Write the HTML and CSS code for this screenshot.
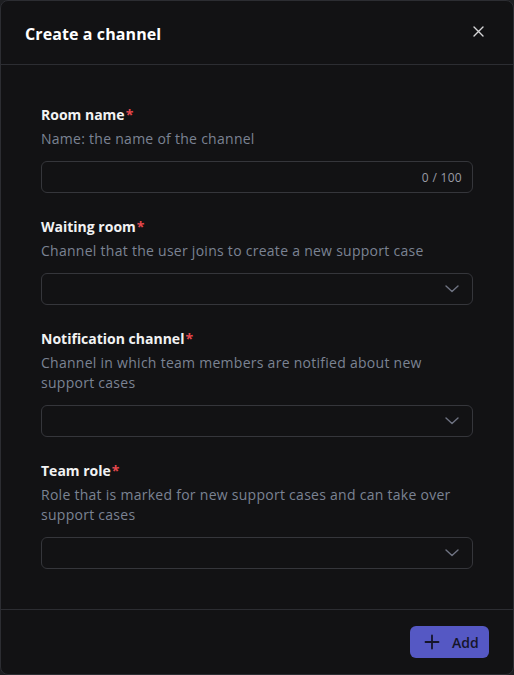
FILE: index.html
```html
<!DOCTYPE html>
<html lang="en">
<head>
<meta charset="utf-8">
<title>Create a channel</title>
<link rel="stylesheet" href="styles.css">
</head>
<body>
<div class="modal">
  <header class="modal-header">
    <h1 class="modal-title">Create a channel</h1>
    <button class="close-btn" aria-label="Close">
      <svg width="11" height="11" viewBox="0 0 11 11"><path d="M1 1L10 10M10 1L1 10" stroke="currentColor" stroke-width="1.4" stroke-linecap="round"/></svg>
    </button>
  </header>
  <div class="modal-body">
    <div class="field">
      <label class="label">Room name<span class="req">*</span></label>
      <p class="desc">Name: the name of the channel</p>
      <div class="input">
        <span class="counter">0 / 100</span>
      </div>
    </div>
    <div class="field">
      <label class="label">Waiting room<span class="req">*</span></label>
      <p class="desc">Channel that the user joins to create a new support case</p>
      <div class="input select">
        <svg class="chev" width="14" height="8" viewBox="0 0 14 8"><path d="M1 1L7 6.5L13 1" fill="none" stroke="currentColor" stroke-width="1.4" stroke-linecap="round" stroke-linejoin="round"/></svg>
      </div>
    </div>
    <div class="field">
      <label class="label">Notification channel<span class="req">*</span></label>
      <p class="desc">Channel in which team members are notified about new support cases</p>
      <div class="input select">
        <svg class="chev" width="14" height="8" viewBox="0 0 14 8"><path d="M1 1L7 6.5L13 1" fill="none" stroke="currentColor" stroke-width="1.4" stroke-linecap="round" stroke-linejoin="round"/></svg>
      </div>
    </div>
    <div class="field">
      <label class="label">Team role<span class="req">*</span></label>
      <p class="desc">Role that is marked for new support cases and can take over support cases</p>
      <div class="input select">
        <svg class="chev" width="14" height="8" viewBox="0 0 14 8"><path d="M1 1L7 6.5L13 1" fill="none" stroke="currentColor" stroke-width="1.4" stroke-linecap="round" stroke-linejoin="round"/></svg>
      </div>
    </div>
  </div>
  <footer class="modal-footer">
    <button class="add-btn">
      <svg width="16" height="16" viewBox="0 0 16 16"><path d="M8 1.5V14.5M1.5 8H14.5" stroke="currentColor" stroke-width="1.8" stroke-linecap="round"/></svg>
      <span>Add</span>
    </button>
  </footer>
</div>
</body>
</html>
```
FILE: styles.css
```css
* { box-sizing: border-box; }
html, body {
  margin: 0;
  padding: 0;
  background: #1d1e21;
}
body {
  font-family: "Open Sans", "Noto Sans", sans-serif;
  color: #f2f2f3;
}
.modal {
  width: 514px;
  height: 675px;
  background: #121214;
  border: 1px solid #2c2d32;
  border-radius: 8px;
  display: flex;
  flex-direction: column;
  overflow: hidden;
}
.modal-header {
  height: 64px;
  display: flex;
  align-items: center;
  justify-content: space-between;
  padding: 0 24px 0 24px;
  border-bottom: 1px solid #2c2d32;
  flex-shrink: 0;
}
.modal-title {
  margin: 0;
  font-size: 16px;
  font-weight: 700;
  color: #ffffff;
  padding-top: 2px;
  letter-spacing: 0.1px;
}
.close-btn {
  background: none;
  border: 0;
  padding: 0;
  color: #d6d6d8;
  display: flex;
  margin-right: 5px;
  margin-top: -2px;
}
.modal-body {
  flex: 1;
  padding: 40px 40px 40px 40px;
  display: flex;
  flex-direction: column;
  gap: 24px;
}
.field {
  display: flex;
  flex-direction: column;
}
.label {
  font-size: 14px;
  line-height: 20px;
  font-weight: 700;
  color: #f2f2f3;
}
.req {
  color: #e5484d;
  margin-left: 1px;
}
.desc {
  margin: 4px 0 12px 0;
  font-size: 14px;
  line-height: 20px;
  letter-spacing: 0.27px;
  color: #7b8393;
}
.input {
  height: 32px;
  border: 1px solid #35363b;
  border-radius: 6px;
  display: flex;
  align-items: center;
  justify-content: flex-end;
  padding: 0 10px;
}
.counter {
  font-size: 12px;
  letter-spacing: 0.3px;
  color: #9a9ca6;
}
.select {
  padding-right: 13px;
}
.chev {
  color: #6f7382;
}
.modal-footer {
  height: 65px;
  border-top: 1px solid #2c2d32;
  display: flex;
  align-items: center;
  justify-content: flex-end;
  padding: 0 24px;
  flex-shrink: 0;
}
.add-btn {
  height: 32px;
  width: 79px;
  background: #5558c4;
  border: 0;
  border-radius: 6px;
  display: flex;
  align-items: center;
  justify-content: flex-start;
  gap: 12px;
  color: #15152a;
  font-family: inherit;
  font-size: 14px;
  font-weight: 600;
  padding: 0 0 0 14px;
}
```
